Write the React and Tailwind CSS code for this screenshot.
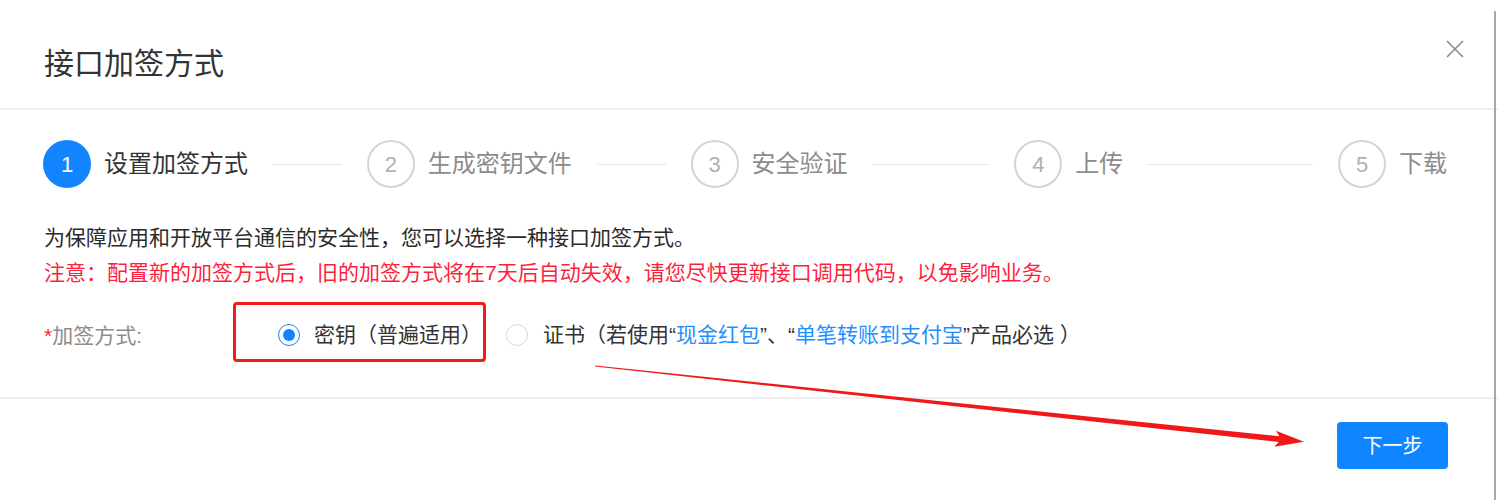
import React from "react";

const steps = [
  { n: 1, t: "设置加签方式" },
  { n: 2, t: "生成密钥文件" },
  { n: 3, t: "安全验证" },
  { n: 4, t: "上传" },
  { n: 5, t: "下载" },
];

function Step({ n, t, active, last }) {
  return (
    <div className={last ? "flex items-center" : "flex flex-1 items-center"}>
      <div
        className={
          active
            ? "flex h-[48px] w-[48px] shrink-0 items-center justify-center rounded-full bg-[#1284ff] text-[22px] text-white"
            : "flex h-[48px] w-[48px] shrink-0 items-center justify-center rounded-full border-2 border-[#d4d4d4] text-[22px] text-[#b0b0b0]"
        }
      >
        {n}
      </div>
      <div
        className={
          active
            ? "ml-[13px] whitespace-nowrap text-[24px] leading-[32px] text-[#333333]"
            : "ml-[13px] whitespace-nowrap text-[24px] leading-[32px] text-[#8c8c8c]"
        }
      >
        {t}
      </div>
      {!last && <div className="mx-[25px] h-px flex-1 bg-[#e6e6e6]" />}
    </div>
  );
}

export default function App() {
  return (
    <div className="relative h-[500px] w-[1498px] overflow-hidden bg-white font-['Liberation_Sans','Noto_Sans_CJK_SC',sans-serif]">
      {/* header */}
      <div className="flex h-[110px] items-start justify-between border-b-2 border-[#eeeeee] pl-[44px] pr-[34px]">
        <div className="mt-[44px] text-[30px] leading-[40px] text-[#333333]">接口加签方式</div>
        <svg className="mt-[40px]" width="18" height="18" viewBox="0 0 18 18">
          <path d="M1 1 L17 17 M17 1 L1 17" stroke="#8a8a8a" strokeWidth="1.6" fill="none" />
        </svg>
      </div>

      {/* body */}
      <div className="border-b-2 border-[#eeeeee] pb-[35px] pl-[44px] pr-[51px] pt-[30px]">
        <div className="-ml-px flex items-center">
          {steps.map((s, i) => (
            <Step key={s.n} n={s.n} t={s.t} active={i === 0} last={i === steps.length - 1} />
          ))}
        </div>

        <div className="mt-[32px] text-[21px] leading-[35px] text-[#2b2b2b]">
          为保障应用和开放平台通信的安全性，您可以选择一种接口加签方式。
        </div>
        <div className="text-[21px] leading-[35px] text-[#ff1f3d]">
          注意：配置新的加签方式后，旧的加签方式将在7天后自动失效，请您尽快更新接口调用代码，以免影响业务。
        </div>

        <div className="mt-[12px] flex items-center">
          <div className="w-[189px] pt-[8px] text-[21px] leading-[30px] text-[#8c8c8c]">
            <span className="text-[#ff1f3d]">*</span>加签方式:
          </div>
          <div className="flex h-[60px] w-[253px] items-center rounded-[4px] border-[3px] border-[#f01c1c] pl-[42px] pt-[6px]">
            <div className="flex h-[22px] w-[22px] shrink-0 items-center justify-center rounded-full border-[1.5px] border-[#1284ff]">
              <div className="h-[12px] w-[12px] rounded-full bg-[#1284ff]" />
            </div>
            <span className="ml-[14px] whitespace-nowrap text-[21px] leading-[30px] text-[#333333]">
              密钥（普遍适用）
            </span>
          </div>
          <div className="ml-[20px] flex items-center pt-[6px]">
            <div className="h-[22px] w-[22px] shrink-0 rounded-full border-[1.5px] border-[#d9d9d9]" />
            <span className="ml-[15px] whitespace-nowrap text-[21px] leading-[30px] text-[#333333]">
              证书（若使用“<span className="text-[#1f8fff]">现金红包</span>”、“<span className="text-[#1f8fff]">单笔转账到支付宝</span>”产品必选 ）
            </span>
          </div>
        </div>
      </div>

      {/* footer */}
      <div className="flex justify-end pr-[50px] pt-[23px]">
        <button className="flex h-[47px] w-[111px] items-center justify-center rounded-[4px] bg-[#0f86ff] text-[20px] text-white">
          下一步
        </button>
      </div>

      {/* right edge line */}
      <div className="absolute bottom-0 right-[2px] top-[11px] w-[2px] bg-[#a8a8a8]" />

      {/* annotation arrow */}
      <svg className="pointer-events-none absolute left-0 top-0" width="1498" height="500">
        <g transform="translate(595 366) rotate(6.1)">
          <polygon points="0,-0.6 688,-2.8 684,-8 713,0 684,8 688,2.8 0,0.6" fill="#f01818" />
        </g>
      </svg>
    </div>
  );
}
